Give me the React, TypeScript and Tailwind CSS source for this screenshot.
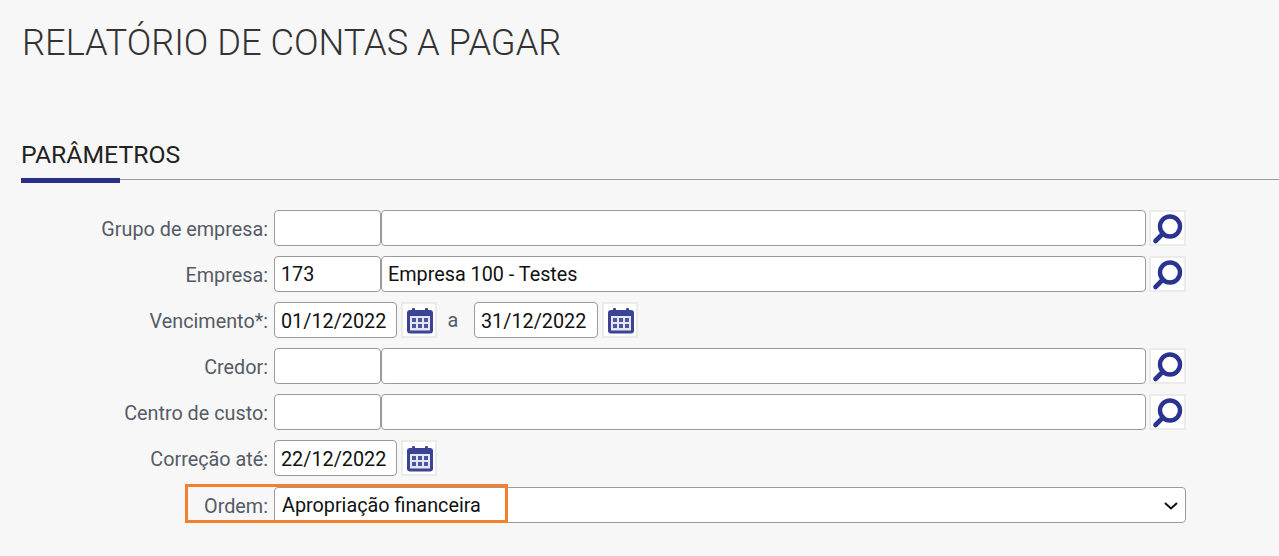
import type { ReactNode } from 'react'

const inputCls = 'h-full rounded-[4px] border border-[#9a9a9a] bg-white px-[6px] text-[19.8px] text-[#111] outline-none'

function SearchIcon() {
  return (
    <button className="ml-[3px] flex h-[36px] w-[37px] shrink-0 items-center justify-center border-2 border-[#ebebeb] bg-white">
      <svg width="37" height="36" viewBox="0 0 37 36" fill="none" className="shrink-0">
        <circle cx="21" cy="16.5" r="10" stroke="#2b3390" strokeWidth="4.4" />
        <path d="M14 23.5 L6.5 31" stroke="#2b3390" strokeWidth="4.6" strokeLinecap="round" />
      </svg>
    </button>
  )
}

function CalendarIcon() {
  return (
    <button className="ml-[4px] flex h-[36px] w-[36px] shrink-0 items-center justify-center border-2 border-[#ebebeb] bg-white">
      <svg width="36" height="36" viewBox="0 0 36 36" fill="none" className="shrink-0">
        <rect x="6" y="8" width="26" height="23.5" rx="3" fill="#3b4394" />
        <rect x="9" y="14" width="20" height="14.5" fill="#e4e6f2" />
        <rect x="11" y="6" width="3" height="5" rx="1" fill="#3b4394" />
        <rect x="24" y="6" width="3" height="5" rx="1" fill="#3b4394" />
        <path d="M11 16h4v4h-4zM17 16h4v4h-4zM23 16h4v4h-4zM11 22h4v4h-4zM17 22h4v4h-4zM23 22h4v4h-4z" fill="#4d55a0" />
      </svg>
    </button>
  )
}

function Row({ label, children }: { label: string; children: ReactNode }) {
  return (
    <div className="mb-[10px] flex h-[36px] items-center">
      <label className="w-[268px] shrink-0 pt-[3px] text-right text-[19.8px] text-[#555b66]">{label}</label>
      <div className="ml-[6px] flex h-full items-center">{children}</div>
    </div>
  )
}

function LookupRow({ label, code = '', name = '' }: { label: string; code?: string; name?: string }) {
  return (
    <Row label={label}>
      <input readOnly value={code} className={`${inputCls} w-[107px]`} />
      <input readOnly value={name} className={`${inputCls} w-[765px]`} />
      <SearchIcon />
    </Row>
  )
}

export default function App() {
  return (
    <div className="h-[556px] overflow-hidden bg-[#f7f7f7] font-['Roboto',sans-serif]">
      <h1 className="pl-[22px] pt-[21px] text-[36.25px] font-light leading-[44px] text-[#333]">RELATÓRIO DE CONTAS A PAGAR</h1>

      <div className="mt-[65px] ml-[21px] border-b border-[#9a9a9a]">
        <h2 className="relative h-[49px] pt-[9px] text-[24.75px] leading-[32px] text-[#222]">
          PARÂMETROS
          <span className="absolute bottom-[-4px] left-0 h-[5px] w-[99px] bg-[#2b2f85]" />
        </h2>
      </div>

      <div className="mt-[30px]">
        <LookupRow label="Grupo de empresa:" />
        <LookupRow label="Empresa:" code="173" name="Empresa 100 - Testes" />
        <Row label="Vencimento*:">
          <input readOnly value="01/12/2022" className={`${inputCls} w-[123px] pt-[2px]`} />
          <CalendarIcon />
          <span className="mr-[5px] w-[32px] pt-[2px] text-center text-[19.8px] text-[#555b66]">a</span>
          <input readOnly value="31/12/2022" className={`${inputCls} w-[123.5px] pt-[2px]`} />
          <CalendarIcon />
        </Row>
        <LookupRow label="Credor:" />
        <LookupRow label="Centro de custo:" />
        <Row label="Correção até:">
          <input readOnly value="22/12/2022" className={`${inputCls} w-[123px] pt-[2px]`} />
          <CalendarIcon />
        </Row>
        <div className="relative mt-[11px]">
          <Row label="Ordem:">
            <div className={`${inputCls} flex w-[912px] items-center justify-between pl-[7px] pt-[2px]`}>
              <span>Apropriação financeira</span>
              <svg width="14" height="8" viewBox="0 0 14 8" fill="none" className="mr-[1px]">
                <path d="M1 1l6 5.5L13 1" stroke="#111" strokeWidth="2" />
              </svg>
            </div>
          </Row>
          <div className="absolute left-[185px] top-[-3px] h-[39px] w-[323px] border-[3px] border-[#f47f2c]" />
        </div>
      </div>
    </div>
  )
}
